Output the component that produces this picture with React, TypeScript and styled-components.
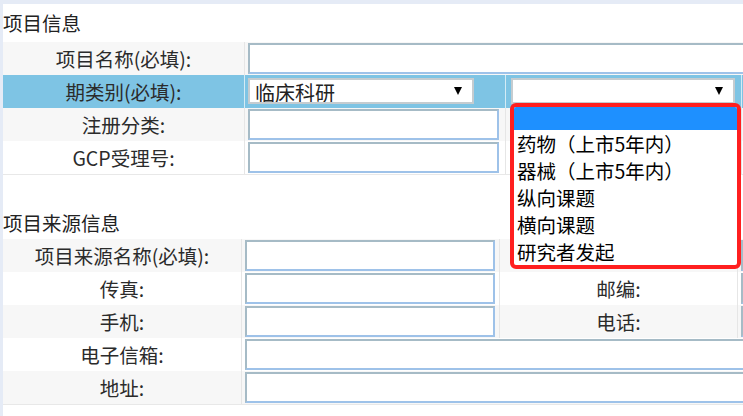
import styled, { createGlobalStyle } from 'styled-components';

const GlobalStyle = createGlobalStyle`
  body {
    margin: 0;
    background: #e5ebf6;
    overflow: hidden;
    font-family: "Noto Sans CJK SC", "Noto Sans", sans-serif;
    color: #333;
  }
`;

const Page = styled.div`
  padding: 4px 0 0 3px;
`;

const Sheet = styled.div`
  background: #fff;
  width: 1100px;
  height: 412px;
`;

const SectionTitle = styled.div<{ $top: number; $lh: number }>`
  padding-top: ${(p) => p.$top}px;
  height: ${(p) => p.$lh}px;
  line-height: ${(p) => p.$lh}px;
  font-size: 19.5px;
  color: #222;
`;

const Table = styled.div`
  border-bottom: 1px solid #e8e8e8;
`;

type Tone = 'gray' | 'white' | 'blue';
const toneBg: Record<Tone, string> = {
  gray: '#f7f7f7',
  white: '#ffffff',
  blue: '#7ec4e4',
};

const Row = styled.div<{ $cols: string; $tone: Tone }>`
  display: grid;
  grid-template-columns: ${(p) => p.$cols};
  height: 33px;
  background: ${(p) => toneBg[p.$tone]};
  --sep: ${(p) => (p.$tone === 'blue' ? '#d4ebf5' : '#e6e6e6')};
`;

const Label = styled.div`
  border-right: 1px solid var(--sep);
  text-align: center;
  line-height: 33px;
  font-size: 19.5px;
  color: #2b2b2b;
  white-space: nowrap;
  overflow: hidden;
`;

const Field = styled.div<{ $span?: number; $last?: boolean }>`
  grid-column: span ${(p) => p.$span ?? 1};
  border-right: ${(p) => (p.$last ? 'none' : '1px solid var(--sep)')};
  padding: 1px 0 0 3px;
  min-width: 0;
`;

const TextInput = styled.div<{ $width?: number }>`
  box-sizing: border-box;
  width: ${(p) => (p.$width ? `${p.$width}px` : '100%')};
  height: 31px;
  background: #fff;
  border: 2px solid;
  border-color: #a6bbc6 #9ec2e9 #9ec2e9 #a6bbc6;
`;

const SelectBox = styled.div<{ $width: number; $offset: number }>`
  position: relative;
  box-sizing: border-box;
  width: ${(p) => p.$width}px;
  height: 26px;
  margin: 2px 0 0 ${(p) => p.$offset}px;
  background: #fff;
  border: 2px solid #c5ccd0;
  display: flex;
  align-items: flex-start;
  justify-content: space-between;
`;

const SelectValue = styled.span`
  padding-left: 5px;
  font-size: 20px;
  line-height: 25px;
  height: 22px;
  overflow: hidden;
  color: #222;
  white-space: nowrap;
`;

const Arrow = styled.span`
  width: 0;
  height: 0;
  margin: 7px 10px 0 0;
  border-left: 4px solid transparent;
  border-right: 4px solid transparent;
  border-top: 8px solid #000;
`;

const DropList = styled.div`
  position: absolute;
  top: 23px;
  left: -3px;
  width: 231px;
  height: 166px;
  box-sizing: border-box;
  border: 4px solid #ff1f1f;
  border-radius: 6px;
  background: #fff;
  overflow: hidden;
  z-index: 10;
`;

const Option = styled.div<{ $active?: boolean }>`
  height: ${(p) => (p.$active ? 23 : 27)}px;
  line-height: 27px;
  padding-left: 3px;
  font-size: 19.5px;
  color: #000;
  background: ${(p) => (p.$active ? '#1e90ff' : 'transparent')};
  white-space: nowrap;
`;

const options = ['药物（上市5年内）', '器械（上市5年内）', '纵向课题', '横向课题', '研究者发起'];

const COLS_A = '242px 261px 236px 1fr';
const COLS_B = '239px 258px 238px 1fr';

export default function App() {
  return (
    <>
      <GlobalStyle />
      <Page>
        <Sheet>
          <SectionTitle $top={0} $lh={38}>项目信息</SectionTitle>
          <Table>
            <Row $cols={COLS_A} $tone="gray">
              <Label>项目名称(必填):</Label>
              <Field $span={3} $last>
                <TextInput />
              </Field>
            </Row>
            <Row $cols={COLS_A} $tone="blue">
              <Label>期类别(必填):</Label>
              <Field>
                <SelectBox $width={226} $offset={0}>
                  <SelectValue>临床科研</SelectValue>
                  <Arrow />
                </SelectBox>
              </Field>
              <Field>
                <SelectBox $width={224} $offset={2}>
                  <SelectValue />
                  <Arrow />
                  <DropList>
                    <Option $active />
                    {options.map((o) => (
                      <Option key={o}>{o}</Option>
                    ))}
                  </DropList>
                </SelectBox>
              </Field>
              <Field $last />
            </Row>
            <Row $cols={COLS_A} $tone="gray">
              <Label>注册分类:</Label>
              <Field>
                <TextInput $width={251} />
              </Field>
              <Field />
              <Field $last />
            </Row>
            <Row $cols={COLS_A} $tone="white">
              <Label>GCP受理号:</Label>
              <Field>
                <TextInput $width={251} />
              </Field>
              <Field />
              <Field $last />
            </Row>
          </Table>

          <SectionTitle $top={32} $lh={32}>项目来源信息</SectionTitle>
          <Table>
            <Row $cols={COLS_B} $tone="gray">
              <Label>项目来源名称(必填):</Label>
              <Field>
                <TextInput $width={250} />
              </Field>
              <Label />
              <Field $last>
                <TextInput />
              </Field>
            </Row>
            <Row $cols={COLS_B} $tone="white">
              <Label>传真:</Label>
              <Field>
                <TextInput $width={250} />
              </Field>
              <Label>邮编:</Label>
              <Field $last>
                <TextInput />
              </Field>
            </Row>
            <Row $cols={COLS_B} $tone="gray">
              <Label>手机:</Label>
              <Field>
                <TextInput $width={250} />
              </Field>
              <Label>电话:</Label>
              <Field $last>
                <TextInput />
              </Field>
            </Row>
            <Row $cols={COLS_B} $tone="white">
              <Label>电子信箱:</Label>
              <Field $span={3} $last>
                <TextInput />
              </Field>
            </Row>
            <Row $cols={COLS_B} $tone="gray">
              <Label>地址:</Label>
              <Field $span={3} $last>
                <TextInput />
              </Field>
            </Row>
          </Table>
        </Sheet>
      </Page>
    </>
  );
}
